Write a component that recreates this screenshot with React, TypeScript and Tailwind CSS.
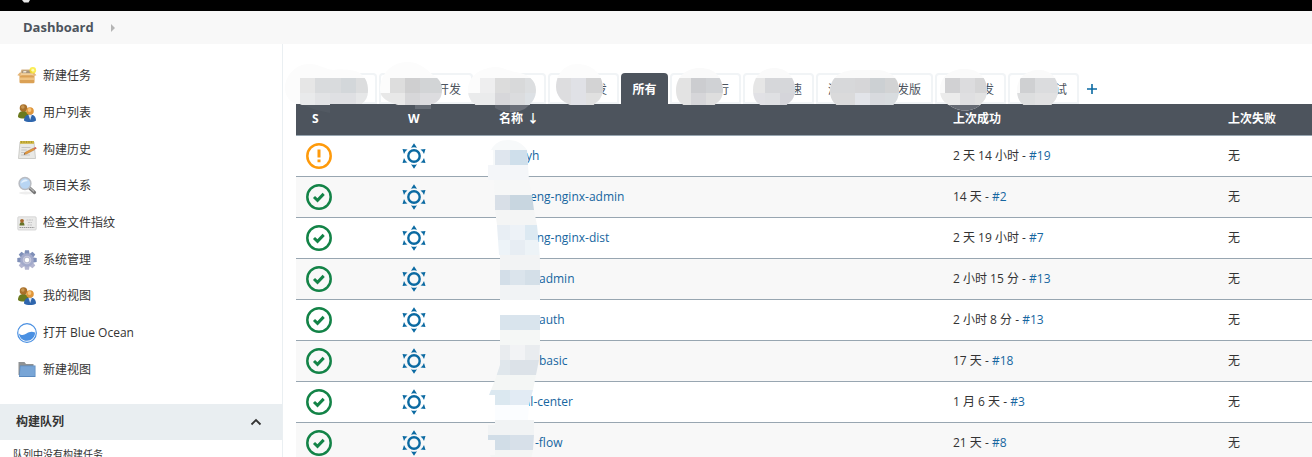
import type { ReactNode } from "react";

const PeopleIcon = () => (
  <svg viewBox="0 0 20 20" className="size-5" aria-hidden="true">
    <path d="M1 14c0-4 2-6 5.500-6S12 10 12 14c-2 2-9 2-11 0z" fill="#6b7a1e" />
    <circle cx="6.500" cy="5" r="3.800" fill="#a8702a" />
    <circle cx="5.800" cy="4" r="1.800" fill="#c99752" />
    <path d="M7 17.500c0-4 2.500-6 6-6s6 2 6 6c-2.500 2-9.500 2-12 0z" fill="#2f66ad" />
    <path d="M11.500 12l1.700 5 1.600-5z" fill="#dbe6f4" />
    <circle cx="13" cy="8" r="3.800" fill="#e0963a" />
    <circle cx="12.500" cy="7" r="1.900" fill="#f8c67c" />
  </svg>
);

const BoxIcon = () => (
  <svg viewBox="0 0 20 20" className="size-5" aria-hidden="true">
    <path d="M4.500 3.500h10l1.500 4.500H3z" fill="#d3b185" />
    <path d="M5.500 4.500h7.500l1 3H4.500z" fill="#a89479" />
    <path d="M6.500 5h3l-.5 1.500H6z" fill="#f0e8da" />
    <path d="M2.500 8h15v8.500l-1 .8h-13l-1-.8z" fill="#dba155" />
    <path d="M3 11.500h14v2.500H3z" fill="#efc382" />
    <path d="M2.800 6.500L.3 9.300l3.700 1 1.500-2.800zM17 6.500l2.500 2.800-3.500 1-1.500-2.800z" fill="#e5b678" />
    <path d="M4 7.300h12l.5 2H3.500z" fill="#f2cf9a" />
    <circle cx="15.800" cy="4.200" r="3.300" fill="#f8e71c" opacity=".75" />
    <circle cx="15.800" cy="4.200" r="1.400" fill="#fffbb0" />
  </svg>
);

const NotepadIcon = () => (
  <svg viewBox="0 0 20 20" className="size-5" aria-hidden="true">
    <path d="M3 2h14l1.500 16.500h-17z" fill="#e9e9e6" stroke="#bcbcb8" strokeWidth=".7" />
    <path d="M3 1h14v2.800H3z" fill="#cdb541" />
    <path d="M4.500 1v2M7 1v2M9.500 1v2M12 1v2M14.500 1v2" stroke="#a18c2c" strokeWidth=".7" />
    <path d="M4.500 7.500h9M4.300 10h5.500M4.100 12.500h4M4 15h9" stroke="#bbb" strokeWidth=".8" />
    <path d="M7 14.300l1.200-2 8.300-4.200 1.200 1.600-8.200 4.300z" fill="#e39a3d" stroke="#a8662a" strokeWidth=".4" />
    <path d="M16.500 8l2.200-1.100 1 1.500-2 1.200z" fill="#d0655a" />
    <path d="M7 14.500l.6-1.200.7.9z" fill="#333" />
  </svg>
);

const SearchIcon = () => (
  <svg viewBox="0 0 20 20" className="size-5" aria-hidden="true">
    <ellipse cx="9" cy="17" rx="7" ry="1.500" fill="#eee" />
    <path d="M12 11.500l5.500 5" stroke="#777" strokeWidth="3.200" strokeLinecap="round" />
    <path d="M12.500 11.500l4.500 4" stroke="#b5b5b5" strokeWidth="1.200" />
    <circle cx="8" cy="7.500" r="5.900" fill="#b8d5f3" stroke="#b9bcc2" strokeWidth="1.500" />
    <path d="M4 7.500a4 4 0 0 1 7-2.500c-2 .2-5 1-7 2.500z" fill="#e4f1fd" />
  </svg>
);

const CardIcon = () => (
  <svg viewBox="0 0 20 20" className="size-5" aria-hidden="true">
    <rect x=".8" y="3.800" width="18.400" height="13.200" rx="1" fill="#eaeae9" stroke="#cfcfcf" strokeWidth=".8" />
    <path d="M2.500 12.500c0-2.500 1-3.500 2.500-3.500s2.500 1 2.500 3.500z" fill="#66752a" />
    <circle cx="5" cy="7.800" r="1.900" fill="#a8662a" />
    <path d="M9.500 7h6.500M11 9.500h4M10.500 12h5" stroke="#bbb" strokeWidth=".8" strokeDasharray="2 .5" />
    <path d="M2.500 14.500h15" stroke="#999" strokeWidth="1.100" strokeDasharray="1.500 .6" />
  </svg>
);

const teeth = [0, 45, 90, 135, 180, 225, 270, 315];

const GearIcon = () => (
  <svg viewBox="0 0 20 20" className="size-5" aria-hidden="true">
    {teeth.map((deg) => (
      <path key={deg} d="M8 .3h4l.8 5H7.200z" fill={deg > 90 && deg < 270 ? "#b3b5d0" : "#7f8fb8"} transform={`rotate(${deg} 10 10)`} />
    ))}
    <circle cx="10" cy="10" r="6.800" fill="#a3aacb" />
    <circle cx="10" cy="10" r="4.300" fill="#c7c9dd" />
    <circle cx="10" cy="10" r="2.800" fill="#fff" stroke="#9096b5" strokeWidth=".6" />
  </svg>
);

const OceanIcon = () => (
  <svg viewBox="0 0 20 20" className="size-5" aria-hidden="true">
    <circle cx="10" cy="10" r="9.300" fill="#fff" stroke="#4a90e2" strokeWidth="1.200" />
    <path d="M2 10.500c2.500 2.200 5 1.800 7.500 0C12 8.700 15 8 18 9.500c.3 4.500-3.500 8.300-8 8.300s-7.700-3.200-8-7.300z" fill="#4a90e2" />
  </svg>
);

const FolderIcon = () => (
  <svg viewBox="0 0 20 20" className="size-5" aria-hidden="true">
    <path d="M1.500 2h6l1.500 2h7.500v11h-15z" fill="#8f9294" />
    <path d="M3 5.500h15.500V17H2z" fill="#5a89be" />
    <path d="M3.500 6.300h14.300v9.700H2.800z" fill="#78a5d6" />
  </svg>
);

const tasks: { label: string; icon: ReactNode }[] = [
  { label: "新建任务", icon: <BoxIcon /> },
  { label: "用户列表", icon: <PeopleIcon /> },
  { label: "构建历史", icon: <NotepadIcon /> },
  { label: "项目关系", icon: <SearchIcon /> },
  { label: "检查文件指纹", icon: <CardIcon /> },
  { label: "系统管理", icon: <GearIcon /> },
  { label: "我的视图", icon: <PeopleIcon /> },
  { label: "打开 Blue Ocean", icon: <OceanIcon /> },
  { label: "新建视图", icon: <FolderIcon /> },
];

const tabs = [
  { id: 1, start: "", end: "", width: "w-[81px]" },
  { id: 2, start: "", end: "开发", width: "w-[94px]" },
  { id: 3, start: "", end: "", width: "w-[71px]" },
  { id: 4, start: "", end: "发", width: "w-[71px]" },
  { id: 5, start: "", end: "所有", width: "w-[47px]", active: true },
  { id: 6, start: "", end: "行", width: "w-[71px]" },
  { id: 7, start: "", end: "速", width: "w-[71px]" },
  { id: 8, start: "测", end: "发版", width: "w-[117px]" },
  { id: 9, start: "", end: "发", width: "w-[71px]" },
  { id: 10, start: "", end: "试", width: "w-[71px]" },
];

const jobs = [
  { name: "yh", pad: "pl-[27px]", ok: false, time: "2 天 14 小时", build: "#19" },
  { name: "eng-nginx-admin", pad: "pl-[31px]", ok: true, time: "14 天", build: "#2" },
  { name: "eng-nginx-dist", pad: "pl-[31px]", ok: true, time: "2 天 19 小时", build: "#7" },
  { name: "admin", pad: "pl-10", ok: true, time: "2 小时 15 分", build: "#13" },
  { name: "auth", pad: "pl-10", ok: true, time: "2 小时 8 分", build: "#13" },
  { name: "basic", pad: "pl-10", ok: true, time: "17 天", build: "#18" },
  { name: "hl-center", pad: "pl-6", ok: true, time: "1 月 6 天", build: "#3" },
  { name: "-flow", pad: "pl-9", ok: true, time: "21 天", build: "#8" },
];

function StatusIcon({ ok }: { ok: boolean }) {
  return (
    <svg viewBox="0 0 26 26" className="block size-[26px]" fill="none" role="img" aria-label={ok ? "success" : "unstable"}>
      <circle cx="13" cy="13" r="11.700" stroke={ok ? "#138347" : "#fe9a0b"} strokeWidth="2.500" />
      {ok ? (
        <path d="M8 13l3.500 3.300 6.200-6.400" stroke="#138347" strokeWidth="3" />
      ) : (
        <path d="M13 6.500v8M13 16.500v2.800" stroke="#fe9a0b" strokeWidth="3" />
      )}
    </svg>
  );
}

function SunIcon() {
  return (
    <svg viewBox="0 0 26 26" className="block size-[26px]" role="img" aria-label="sunny">
      <circle cx="13" cy="13" r="5.700" fill="none" stroke="#0b6aa2" strokeWidth="2.400" />
      <g fill="#0b6aa2">
        <path d="M13 .3l3 4.400a9 9 0 0 0-6 0z" />
        <path d="M13 25.700l3-4.400a9 9 0 0 1-6 0z" />
        <path d="M24.500 6l-1.500 5a9 9 0 0 0-3.500-4.500z" />
        <path d="M1.500 6l1.500 5a9 9 0 0 1 3.500-4.500z" />
        <path d="M24.500 20l-1.500-5a9 9 0 0 1-3.500 4.500z" />
        <path d="M1.500 20l1.500-5a9 9 0 0 0 3.500 4.500z" />
      </g>
    </svg>
  );
}

// x, y, width, height, colour
type Block = [number, number, number, number, string];

const tabBlots: { id: string; shape: string; blocks: Block[] }[] = [
  {
    id: "t1",
    shape: "M-11 17C-12 3 0-10 14-9c9 0 15 5 23 6 9-1 20 0 25 2 7 4 10 10 10 18 0 8-3 11-6 14H34v9L20 37 4 31c-8 0-14-6-15-14z",
    blocks: [[-11, -11, 83, 43, "#fcfcfc"], [4, 5, 15, 15, "#e6e6e6"], [19, 5, 26, 15, "#d9dbdd"], [45, 5, 15, 15, "#d3d7da"], [60, 5, 12, 15, "#dcddde"], [4, 20, 15, 12, "#e9eaeb"], [19, 20, 15, 12, "#e2e3e5"], [34, 20, 26, 12, "#dfe0e3"], [60, 20, 12, 12, "#e6e7e8"], [4, 32, 36, 8, "#525962"]],
  },
  {
    id: "t2",
    shape: "M84 17C84 0 97-12 113-11c12 1 17 7 24 13 7 4 9 9 9 15 0 8-4 12-9 14h-2v5h-16v-4h-16c-10-2-19-7-19-15z",
    blocks: [[84, -12, 62, 44, "#fcfcfc"], [94, 5, 15, 15, "#dddddd"], [109, 5, 15, 15, "#cfcfd0"], [124, 5, 22, 15, "#d2d4d6"], [84, 20, 25, 12, "#e8e8e8"], [109, 20, 15, 12, "#d7d7d9"], [124, 20, 22, 12, "#dcdcdf"], [85, 32, 61, 5, "#666c75"]],
  },
  {
    id: "t3",
    shape: "M172 17c0-13 11-22 27-23 8 0 13 4 21 5 12 2 20 8 20 18 0 8-4 13-9 17-6 6-22 7-32 1l-1-3h-18c-5-3-8-8-8-15z",
    blocks: [[172, -7, 69, 39, "#fcfcfc"], [184, 5, 15, 15, "#eeeeef"], [199, 5, 15, 15, "#dcdcdc"], [214, 5, 15, 15, "#d8d9da"], [229, 5, 12, 15, "#dcdee0"], [172, 20, 27, 12, "#eaebec"], [199, 20, 15, 12, "#d7d7da"], [214, 20, 15, 12, "#dbdcde"], [229, 20, 12, 12, "#dde1e5"], [199, 32, 15, 8, "#5f656e"], [214, 32, 24, 8, "#6b7079"]],
  },
  {
    id: "t4",
    shape: "M260 14c0-12 8-23 21-23 15 0 26 10 26 25 0 8-5 13-10 16h-22c-8-2-15-9-15-18z",
    blocks: [[260, -9, 47, 42, "#fcfcfc"], [260, 5, 15, 28, "#dddddf"], [275, 5, 15, 28, "#e0e1e6"], [290, 5, 17, 15, "#d3d3d4"], [290, 20, 17, 13, "#e0e0e0"]],
  },
  {
    id: "t6",
    shape: "M380 17c0-12 9-22 24-22s22 9 23 22c0 8-4 12-9 15h-30c-5-2-8-7-8-15z",
    blocks: [[380, -5, 47, 38, "#fafafa"], [380, 5, 15, 28, "#e3e3e3"], [395, 5, 15, 15, "#cccdd0"], [410, 5, 17, 15, "#d0d2d5"], [395, 20, 15, 13, "#d6d6d9"], [410, 20, 17, 13, "#dedede"]],
  },
  {
    id: "t7",
    shape: "M457 17c0-12 8-22 21-22s21 9 21 22c0 8-4 12-9 15h-25c-5-2-8-7-8-15z",
    blocks: [[457, -5, 43, 38, "#fafafa"], [457, 5, 12, 15, "#e6e6e6"], [469, 5, 30, 15, "#d6d7da"], [457, 20, 12, 13, "#e1e1e5"], [469, 20, 15, 13, "#dfe0e3"], [484, 20, 16, 13, "#d5d5da"]],
  },
  {
    id: "t8",
    shape: "M534 17c1-14 12-20 26-20h20c14 0 23 8 23 20 0 8-3 12-6 15h-56c-4-2-7-7-7-15z",
    blocks: [[534, -3, 70, 36, "#fafafa"], [534, 5, 25, 15, "#d7d8da"], [559, 5, 15, 15, "#d6d6d8"], [574, 5, 15, 15, "#ccd0d3"], [589, 5, 15, 15, "#d2d3d4"], [534, 20, 25, 13, "#dadadb"], [559, 20, 15, 13, "#e2e4e9"], [574, 20, 15, 13, "#d8dade"], [589, 20, 15, 13, "#d8dcdf"]],
  },
  {
    id: "t9",
    shape: "M644 17c0-13 10-21 25-21 14 0 22 9 22 21 0 8-3 11-6 14-7 8-21 9-32 1-6-3-9-8-9-15z",
    blocks: [[644, -4, 48, 42, "#fafafa"], [649, 5, 15, 15, "#d1d1d3"], [664, 5, 15, 15, "#dcdcde"], [679, 5, 13, 15, "#d5d5d6"], [644, 20, 20, 12, "#ebebeb"], [664, 20, 15, 12, "#dfdfe1"], [679, 20, 13, 12, "#e2e2e2"], [644, 32, 48, 8, "#666b74"]],
  },
  {
    id: "t10",
    shape: "M721 17c0-12 9-20 22-20 12 0 19 8 19 20 0 8-4 12-7 15h-27c-4-2-7-7-7-15z",
    blocks: [[721, -3, 42, 36, "#fafafa"], [724, 5, 15, 15, "#cfd0d2"], [739, 5, 23, 15, "#dbdcde"], [721, 20, 18, 13, "#dddedf"], [739, 20, 24, 13, "#e1e1e2"]],
  },
];

const nameBlocks: Block[] = [
  [0, 0, 60, 25, "#f7f9fa"],
  [12, 10, 15, 15, "#dfe6ee"], [27, 10, 33, 15, "#cfdfeb"],
  [0, 25, 60, 15, "#f4f6f9"],
  [0, 40, 60, 15, "#f6f7f7"],
  [0, 55, 12, 15, "#f5f5f4"], [12, 55, 15, 15, "#d8dfe7"], [27, 55, 33, 15, "#c8d6e0"],
  [0, 70, 60, 15, "#f4f5f5"],
  [0, 85, 27, 15, "#e8eef4"], [27, 85, 15, 15, "#edf2f7"], [42, 85, 18, 15, "#dce9f2"],
  [0, 100, 27, 15, "#edf3f8"], [27, 100, 15, 15, "#e7edf3"], [42, 100, 18, 15, "#edf3f7"],
  [0, 115, 60, 15, "#f2f3f4"],
  [0, 130, 27, 15, "#d3dee8"], [27, 130, 15, 15, "#dbe4ec"], [42, 130, 18, 15, "#d4dfe8"],
  [0, 145, 60, 15, "#f1f3f5"],
  [0, 160, 60, 15, "#ffffff"],
  [0, 175, 60, 15, "#d9e4ed"],
  [0, 190, 60, 15, "#f5f7f6"],
  [0, 205, 27, 15, "#e9ecef"], [27, 205, 15, 15, "#f2f3f5"], [42, 205, 18, 15, "#e9ecef"],
  [0, 220, 27, 15, "#e0e7ec"], [27, 220, 33, 15, "#dce2e8"],
  [0, 235, 60, 15, "#f4f6f5"],
  [0, 250, 27, 15, "#dbe8f0"], [27, 250, 33, 15, "#e2ebf4"],
  [0, 265, 60, 15, "#fbfdff"],
  [0, 280, 60, 15, "#f1f3f4"],
  [0, 295, 27, 15, "#d1dde7"], [27, 295, 33, 15, "#d7e0e9"],
  [0, 310, 60, 15, "#f3f5f4"],
];

function Blocks({ blocks }: { blocks: Block[] }) {
  return blocks.map(([x, y, w, h, fill]) => <rect key={`${x}-${y}-${fill}`} x={x} y={y} width={w} height={h} fill={fill} />);
}

function TabBlots() {
  return (
    <svg viewBox="0 -10 790 50" className="pointer-events-none absolute -top-2.5 left-0 z-10 h-[50px] w-[790px] overflow-visible" aria-hidden="true">
      {tabBlots.map((blot) => (
        <g key={blot.id}>
          <clipPath id={blot.id}>
            <path d={blot.shape} />
          </clipPath>
          <g clipPath={`url(#${blot.id})`}>
            <Blocks blocks={blot.blocks} />
          </g>
        </g>
      ))}
    </svg>
  );
}

function NameBlots() {
  return (
    <svg viewBox="0 0 60 320" className="pointer-events-none absolute top-9 left-[184px] h-[320px] w-[60px]" aria-hidden="true">
      <clipPath id="names">
        <path d="M11 10C15 3 20 0 28 0c9 0 15 4 19 10l1 15 1 15 3 15 2 15 3 15 2 20 1 15v85l-1 15-3 15-3 15-4 15-1 15h6v15l-1 15-3 15H15l-5-10h5v-15H8v-15h7v-30H9l6-15 5-15V115h-1l-2-30-2-15-1-30h-6V25h5V10z" />
      </clipPath>
      <g clipPath="url(#names)" >
        <g transform="translate(3 0)">
          <Blocks blocks={nameBlocks} />
        </g>
      </g>
    </svg>
  );
}

function Sidebar() {
  return (
    <aside className="w-[283px] shrink-0 border-r border-[#eaeff2] pt-3.5">
      <nav className="grid h-[330px] grid-rows-9">
        {tasks.map((task) => (
          <a key={task.label} href="#" className="flex items-center gap-1.5 pl-[17px]">
            {task.icon}
            {task.label}
          </a>
        ))}
      </nav>
      <div className="mt-4 flex h-9 items-center justify-between bg-[#e9eef1] pr-5 pl-4">
        <h2 className="font-bold">构建队列</h2>
        <button type="button" aria-label="collapse">
          <svg viewBox="0 0 12 12" className="size-3" fill="none" stroke="#333" strokeWidth="1.800">
            <path d="M1.500 8.500L6 4l4.500 4.500" />
          </svg>
        </button>
      </div>
      <p className="pt-1.5 pl-[13px] text-[10px] leading-4">队列中没有构建任务</p>
    </aside>
  );
}

function TabBar() {
  return (
    <div className="relative flex h-[31px] gap-0.5">
      {tabs.map((tab) => (
        <a
          key={tab.id}
          href="#"
          aria-label={tab.end || "view"}
          className={
            tab.active
              ? `${tab.width} flex shrink-0 items-center justify-center rounded-t-[4px] bg-[#4d545d] pt-0.5 font-bold text-white`
              : `${tab.width} flex shrink-0 items-center justify-between rounded-t-[4px] border-2 border-[#f1f4f6] px-2.5 pt-0.5 text-[#4d545d]`
          }
        >
          {!tab.active && <span>{tab.start}</span>}
          <span>{tab.end}</span>
        </a>
      ))}
      <a href="#" aria-label="new view" className="ml-1.5 flex items-center">
        <svg viewBox="0 0 10 10" className="size-2.5" stroke="#0b6aa2" strokeWidth="1.600">
          <path d="M5 0v10M0 5h10" />
        </svg>
      </a>
      <TabBlots />
    </div>
  );
}

function JobTable() {
  return (
    <div className="relative">
      <table className="w-full table-fixed border-collapse text-left">
        <colgroup>
          <col className="w-[105px]" />
          <col className="w-[98px]" />
          <col />
          <col className="w-[275px]" />
          <col className="w-[84px]" />
        </colgroup>
        <thead>
          <tr className="h-[31px] border-b border-[#98a6b1] bg-[#4d545d] text-white">
            <th className="pl-4">S</th>
            <th className="pl-[7px]">W</th>
            <th>名称<span className="pl-1">↓</span></th>
            <th>上次成功</th>
            <th>上次失败</th>
          </tr>
        </thead>
        <tbody>
          {jobs.map((job) => (
            <tr key={job.name} className="h-[41px] border-b border-[#98a6b1] even:bg-[#f8f8f8]">
              <td className="pl-2.5">
                <StatusIcon ok={job.ok} />
              </td>
              <td>
                <SunIcon />
              </td>
              <td className={job.pad}>
                <a href="#" className="font-medium text-[#1666a0]">{job.name}</a>
              </td>
              <td>
                {job.time} - <a href="#" className="font-medium text-[#1666a0]">{job.build}</a>
              </td>
              <td>无</td>
            </tr>
          ))}
        </tbody>
      </table>
      <NameBlots />
    </div>
  );
}

export default function App() {
  return (
    <div className="flex h-screen flex-col overflow-hidden bg-white font-['Open_Sans','Noto_Sans_CJK_SC',sans-serif] text-xs text-[#333]">
      <header className="h-[11px] shrink-0 bg-black pl-[22px]">
        <svg viewBox="0 0 8 3" className="h-[3px] w-2" aria-hidden="true">
          <path d="M0 0h8L6.500 2.500H2z" fill="#e8e8e8" />
        </svg>
      </header>
      <div className="flex h-[33px] shrink-0 items-center gap-[17px] bg-[#f8f8f8] pl-[23px]">
        <a href="#" className="text-[13px] font-bold text-[#4d545d]">Dashboard</a>
        <svg viewBox="0 0 4 8" className="h-2 w-1" aria-hidden="true">
          <path d="M0 0l4 4-4 4z" fill="#b5b5b5" />
        </svg>
      </div>
      <div className="flex min-h-0 flex-1">
        <Sidebar />
        <main className="min-w-0 flex-1 pt-[29px] pl-[13px]">
          <TabBar />
          <JobTable />
        </main>
      </div>
    </div>
  );
}
